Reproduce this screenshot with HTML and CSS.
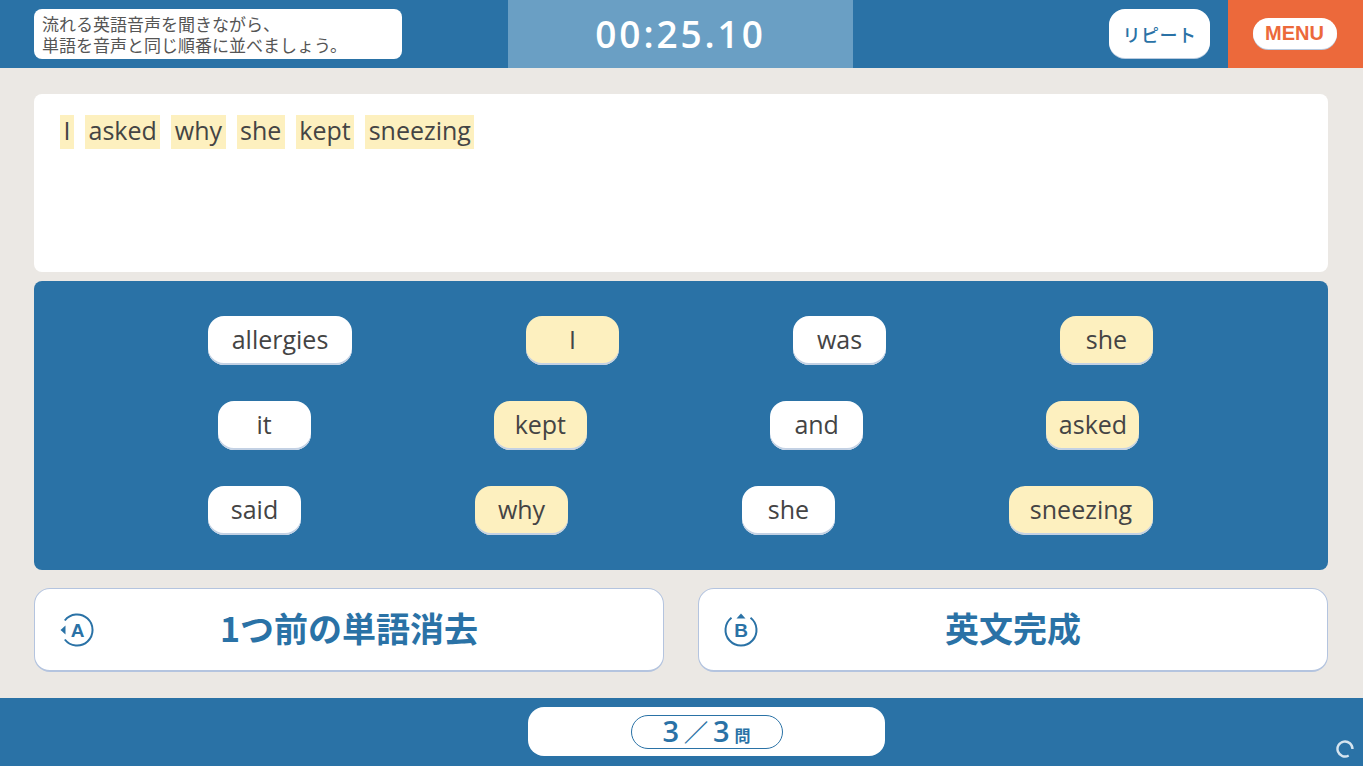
FILE: index.html
```html
<!DOCTYPE html>
<html lang="ja">
<head>
<meta charset="utf-8">
<title>英文完成</title>
<link rel="stylesheet" href="styles.css">
</head>
<body>
<div class="app">
  <header class="top">
    <div class="top-left"><p class="instruction">流れる英語音声を聞きながら、<br>単語を音声と同じ順番に並べましょう。</p></div>
    <div class="timer">00:25.10</div>
    <div class="top-right"><button class="repeat">リピート</button></div>
    <div class="menu-wrap"><button class="menu">MENU</button></div>
  </header>
  <main class="main">
    <section class="answer">
      <span class="word">I</span><span class="word">asked</span><span class="word">why</span><span class="word">she</span><span class="word">kept</span><span class="word">sneezing</span>
    </section>
    <section class="board">
      <div class="row">
        <button class="chip w144">allergies</button>
        <button class="chip on w93">I</button>
        <button class="chip w93">was</button>
        <button class="chip on w93">she</button>
      </div>
      <div class="row narrow">
        <button class="chip w93">it</button>
        <button class="chip on w93">kept</button>
        <button class="chip w93">and</button>
        <button class="chip on w93">asked</button>
      </div>
      <div class="row">
        <button class="chip w93">said</button>
        <button class="chip on w93">why</button>
        <button class="chip w93">she</button>
        <button class="chip on w144">sneezing</button>
      </div>
    </section>
    <section class="actions">
      <button class="action">
        <svg class="key" viewBox="0 0 36 36" width="36" height="36">
          <path d="M5.8 8.5A15.5 15.5 0 1 1 5.8 27.5" fill="none" stroke="#2a72a6" stroke-width="2"/>
          <path d="M1.5 18l5-4.5v9z" fill="#2a72a6"/>
          <text x="18.5" y="24.5" text-anchor="middle" class="key-text">A</text>
        </svg>
        <span class="action-label">1つ前の単語消去</span>
      </button>
      <button class="action">
        <svg class="key" viewBox="0 0 36 36" width="36" height="36">
          <path d="M8.5 5.8A15.5 15.5 0 1 0 27.5 5.8" fill="none" stroke="#2a72a6" stroke-width="2"/>
          <path d="M18 1.5l4.5 5h-9z" fill="#2a72a6"/>
          <text x="18" y="24.5" text-anchor="middle" class="key-text">B</text>
        </svg>
        <span class="action-label">英文完成</span>
      </button>
    </section>
  </main>
  <footer class="bottom">
    <div class="progress">
      <div class="count"><span class="num">3</span><span class="slash">／</span><span class="num">3</span><span class="unit">問</span></div>
    </div>
    <svg class="spinner" viewBox="0 0 18 18" width="18" height="18">
      <path d="M16.5 9A7.5 7.5 0 1 0 12.7 15.5" fill="none" stroke="#d5e4ef" stroke-width="2.4"/>
    </svg>
  </footer>
</div>
</body>
</html>
```

FILE: styles.css
```css
* { box-sizing: border-box; }
html, body { margin: 0; padding: 0; }
body {
  width: 1363px;
  height: 766px;
  overflow: hidden;
  background: #ebe8e4;
  font-family: "Open Sans", "Noto Sans CJK JP", sans-serif;
  color: #444;
}
button { font-family: inherit; border: 0; padding: 0; margin: 0; }
.app { display: flex; flex-direction: column; height: 766px; }

.top {
  display: flex;
  height: 68px;
  background: #2a72a6;
  flex: none;
}
.top-left { width: 508px; padding: 9px 0 0 34px; }
.instruction {
  margin: 0;
  width: 368px;
  height: 50px;
  padding: 4px 8px;
  background: #fff;
  border-radius: 8px;
  font-size: 17px;
  line-height: 21px;
  font-family: "Noto Sans CJK JP", sans-serif;
  color: #555;
}
.timer {
  width: 345px;
  background: #6a9fc4;
  color: #fff;
  font-family: "Open Sans", sans-serif;
  font-size: 37px;
  font-weight: 600;
  letter-spacing: 2.9px;
  text-align: center;
  line-height: 68px;
}
.top-right { flex: 1; display: flex; justify-content: flex-end; padding: 9px 18px 0 0; }
.repeat {
  width: 101px;
  height: 49px;
  border-radius: 16px;
  background: #fff;
  box-shadow: 0 1px 0 #b9cbe0;
  color: #2a72a6;
  font-family: "Noto Sans CJK JP", sans-serif;
  font-size: 18px;
  font-weight: 500;
  letter-spacing: 0.5px;
}
.menu-wrap {
  width: 135px;
  background: #ec693b;
  display: flex;
  justify-content: center;
  padding: 18px 2px 0 0;
}
.menu {
  width: 84px;
  height: 31px;
  border-radius: 16px;
  background: #fff;
  box-shadow: 0 1px 0 #b9cbe0;
  color: #ec693b;
  font-size: 20px;
  font-weight: 700;
  font-family: "Liberation Sans", sans-serif;
}

.main {
  flex: 1;
  padding: 26px 35px 0 34px;
  display: flex;
  flex-direction: column;
}
.answer {
  height: 178px;
  background: #fff;
  border-radius: 8px;
  padding: 21px 26px;
  display: flex;
  align-items: flex-start;
  gap: 11px;
}
.word {
  background: #fdf0bf;
  height: 34px;
  line-height: 31px;
  padding: 0 3.5px;
  font-size: 25px;
  color: #444;
}
.board {
  margin-top: 9px;
  height: 289px;
  background: #2a72a6;
  border-radius: 8px;
  padding-top: 35px;
  display: flex;
  flex-direction: column;
  align-items: center;
  gap: 36px;
}
.row { width: 945px; display: flex; justify-content: space-between; margin-right: 1px; }
.row.narrow { width: 922px; margin-right: 5px; }
.chip {
  height: 49px;
  border-radius: 16px;
  background: #fff;
  box-shadow: inset 0 -2px 0 #c3d1e4;
  font-size: 25px;
  color: #444;
  padding-bottom: 3px;
}
.chip.on { background: #fdf0bf; }
.w144 { width: 144px; }
.w93 { width: 93px; }

.actions {
  margin-top: 18px;
  display: flex;
  gap: 34px;
}
.action {
  flex: 1;
  height: 84px;
  background: #fff;
  border: 1px solid #b4c4df;
  border-bottom-width: 2px;
  border-radius: 16px;
  display: flex;
  align-items: center;
  padding: 0 60px 0 24px;
}
.key { flex: none; }
.key-text {
  font-family: "Liberation Sans", sans-serif;
  font-size: 19px;
  font-weight: 700;
  fill: #2a72a6;
}
.action-label {
  flex: 1;
  text-align: center;
  font-family: "Noto Sans CJK JP", sans-serif;
  font-size: 34px;
  font-weight: 700;
  line-height: 40px;
  padding-bottom: 4px;
  color: #2a72a6;
}

.bottom {
  flex: none;
  height: 68px;
  background: #2a72a6;
  display: flex;
  justify-content: center;
  padding-top: 9px;
  position: relative;
}
.progress {
  width: 357px;
  height: 49px;
  border-radius: 16px;
  background: #fff;
  display: flex;
  justify-content: center;
  padding-top: 8px;
  margin-left: 50px;
}
.count {
  width: 152px;
  height: 34px;
  border: 1px solid #2a72a6;
  border-radius: 17px;
  display: flex;
  align-items: center;
  justify-content: center;
  color: #2a72a6;
  font-family: "Noto Sans CJK JP", sans-serif;
}
.num { font-size: 29px; font-weight: 600; font-family: "Open Sans", sans-serif; line-height: 30px; margin-bottom: 3px; }
.slash { font-size: 24px; font-weight: 900; line-height: 30px; margin: 0 5px 3px; width: 24px; }
.unit { font-size: 16px; font-weight: 700; margin: 5px 0 0 5px; }
.spinner { position: absolute; right: 9px; bottom: 8px; }
```
